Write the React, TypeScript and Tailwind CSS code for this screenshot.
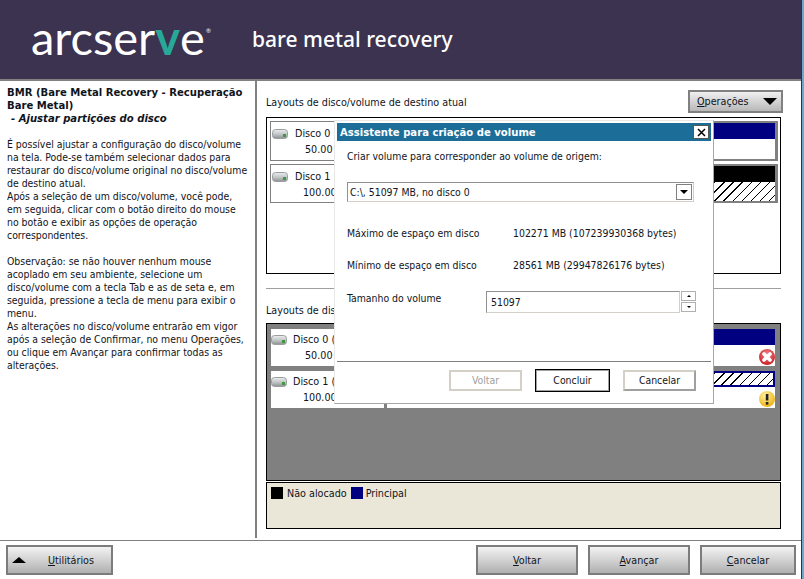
import React from "react";

const HATCH = "bg-[repeating-linear-gradient(135deg,#000_0,#000_0.8px,#fff_0.8px,#fff_6.4px)]";

function DiskIcon() {
  return (
    <svg width="16" height="10" viewBox="0 0 16 10" className="shrink-0">
      <defs>
        <linearGradient id="disk" x1="0" y1="0" x2="0" y2="1">
          <stop offset="0" stopColor="#eceeee" />
          <stop offset="0.5" stopColor="#c4c8c8" />
          <stop offset="1" stopColor="#8c9090" />
        </linearGradient>
      </defs>
      <rect x="0.5" y="0.5" width="15" height="9" rx="3" fill="url(#disk)" stroke="#9a9e9e" />
      <rect x="11" y="5" width="3" height="3" fill="#3f9a3f" />
    </svg>
  );
}

function DiskLabel({ n, size, indent, gap }: { n: string; size: string; indent: string; gap: string }) {
  return (
    <div>
      <div className={`flex items-center ${gap}`}>
        <DiskIcon />
        <span>Disco {n} (</span>
      </div>
      <div className={`mt-[3px] ${indent}`}>{size}</div>
    </div>
  );
}

function FooterButton({ children, width }: { children: React.ReactNode; width: string }) {
  return (
    <div className={`flex items-center justify-center h-[30px] ${width} border-2 border-[#7c7c7c] bg-gradient-to-b from-[#f2f2f2] via-[#d2d2d2] to-[#b0b0b0]`}>
      {children}
    </div>
  );
}

function DialogButton({ label, cls }: { label: string; cls: string }) {
  return <div className={`flex items-center justify-center ${cls}`}>{label}</div>;
}

export default function App() {
  return (
    <div className="relative w-[804px] h-[579px] bg-white overflow-hidden flex text-[10.7px] leading-[13px] text-[#10141c] font-['DejaVu_Sans_Condensed','DejaVu_Sans',sans-serif] [font-stretch:condensed]">
      <div className="w-[801px] h-full flex flex-col">
        <header className="h-[81px] shrink-0 bg-[#3b3350] border-b-2 border-[#808080] flex items-center pl-[31px] text-white">
          <div className="flex items-start font-['Lato',sans-serif] font-normal text-[47px] leading-none w-[221px] -mt-[4px]">
            <span>arcser</span>
            <span className="text-[#27a898] font-bold">v</span>
            <span>e</span>
            <span className="text-[6px] mt-[14px] ml-[1px]">®</span>
          </div>
          <div className="text-[21px] leading-none font-['Noto_Sans',sans-serif] font-medium">bare metal recovery</div>
        </header>

        <main className="flex h-[459px] shrink-0">
          <aside className="w-[257px] shrink-0 border-r-2 border-[#808080] pl-[7px] pt-[5px] mb-[2px] whitespace-nowrap">
            <div className="font-bold text-[11.2px]">BMR (Bare Metal Recovery - Recuperação<br />Bare Metal)</div>
            <div className="font-bold italic pl-[4px] text-[11.2px]">- Ajustar partições do disco</div>
            <div className="mt-[13px] text-[10.4px]">
              É possível ajustar a configuração do disco/volume<br />
              na tela. Pode-se também selecionar dados para<br />
              restaurar do disco/volume original no disco/volume<br />
              de destino atual.<br />
              Após a seleção de um disco/volume, você pode,<br />
              em seguida, clicar com o botão direito do mouse<br />
              no botão e exibir as opções de operação<br />
              correspondentes.
            </div>
            <div className="mt-[13px] text-[10.4px]">
              Observação: se não houver nenhum mouse<br />
              acoplado em seu ambiente, selecione um<br />
              disco/volume com a tecla Tab e as de seta e, em<br />
              seguida, pressione a tecla de menu para exibir o<br />
              menu.<br />
              As alterações no disco/volume entrarão em vigor<br />
              após a seleção de Confirmar, no menu Operações,<br />
              ou clique em Avançar para confirmar todas as<br />
              alterações.
            </div>
          </aside>

          <section className="w-[525px] pl-[9px] flex flex-col">
            <div className="flex justify-between h-[36px] pt-[9px] w-[517px]">
              <span className="mt-[6px]">Layouts de disco/volume de destino atual</span>
              <div className="flex items-center justify-between w-[95px] h-[23px] border-2 border-[#808080] bg-gradient-to-b from-[#f0f0f0] to-[#b8b8b8] pl-[7px] pr-[4px]">
                <span><span className="underline">O</span>perações</span>
                <span className="w-0 h-0 border-x-[7px] border-x-transparent border-t-[7px] border-t-black" />
              </div>
            </div>

            <div className="h-[157px] w-[515px] border border-black pt-[3px] pl-[3px] pr-[2px] flex flex-col gap-[3px]">
              <div className="flex gap-[3px] h-[40px]">
                <div className="w-[114px] border border-[#808080] pt-[5px] pl-[1px]">
                  <DiskLabel n="0" size="50.00" indent="ml-[33px]" gap="gap-[7px]" />
                </div>
                <div className="flex-1 border-y-2 border-r-[3px] border-l-2 border-[#808080]">
                  <div className="h-[16px] bg-[#000080]" />
                </div>
              </div>
              <div className="flex gap-[3px] h-[39px]">
                <div className="w-[114px] border border-[#808080] pt-[5px] pl-[1px]">
                  <DiskLabel n="1" size="100.00" indent="ml-[31px]" gap="gap-[7px]" />
                </div>
                <div className="flex-1 border-y-2 border-r-[3px] border-l-2 border-[#808080] flex flex-col">
                  <div className="h-[16px] bg-black" />
                  <div className={`flex-1 ${HATCH}`} />
                </div>
              </div>
            </div>

            <div className="mt-[14px] h-px w-[515px] bg-[#a0a0a0]" />
            <div className="h-[34px] pt-[15px]">Layouts de dis</div>

            <div className="h-[158px] w-[515px] border border-black bg-[#808080] pt-[5px] pl-[4px] pr-[5px] flex flex-col gap-[5px]">
              <div className="flex gap-[3px] h-[37px]">
                <div className="w-[113px] bg-white pt-[4px]">
                  <DiskLabel n="0" size="50.00" indent="ml-[34px]" gap="gap-[6px]" />
                </div>
                <div className="flex-1 bg-white flex flex-col items-end">
                  <div className="w-full h-[16px] bg-[#000080]" />
                  <svg width="16" height="16" viewBox="0 0 16 16" className="mt-[4px]">
                    <defs>
                      <radialGradient id="red" cx="0.5" cy="0.35" r="0.7">
                        <stop offset="0" stopColor="#f28a8a" />
                        <stop offset="1" stopColor="#c8141c" />
                      </radialGradient>
                    </defs>
                    <circle cx="8" cy="8" r="8" fill="url(#red)" />
                    <path d="M5 5l6 6M11 5l-6 6" stroke="#fff" strokeWidth="3.6" strokeLinecap="round" />
                  </svg>
                </div>
              </div>
              <div className="flex gap-[3px] h-[37px]">
                <div className="w-[113px] bg-white pt-[4px]">
                  <DiskLabel n="1" size="100.00" indent="ml-[32px]" gap="gap-[6px]" />
                </div>
                <div className="flex-1 bg-white flex flex-col items-end">
                  <div className={`w-full h-[16px] border-2 border-[#000080] ${HATCH}`} />
                  <svg width="16" height="16" viewBox="0 0 16 16" className="mt-[4px]">
                    <defs>
                      <radialGradient id="yel" cx="0.4" cy="0.3" r="0.8">
                        <stop offset="0" stopColor="#fff2a0" />
                        <stop offset="1" stopColor="#eaa900" />
                      </radialGradient>
                    </defs>
                    <circle cx="8" cy="8" r="8" fill="url(#yel)" />
                    <rect x="6.8" y="3" width="2.6" height="6.5" fill="#222" />
                    <rect x="6.8" y="11" width="2.6" height="2.6" fill="#222" />
                  </svg>
                </div>
              </div>
            </div>

            <div className="mt-[1px] h-[47px] w-[515px] border border-black bg-[#ebe7d8] flex items-start gap-[3px] px-[4px] pt-[4px]">
              <span className="w-[12px] h-[12px] bg-black" />
              <span className="ml-[1px]">Não alocado</span>
              <span className="w-[12px] h-[12px] bg-[#000080] ml-[1px]" />
              <span>Principal</span>
            </div>
          </section>
        </main>

        <footer className="flex-1 border-t border-[#808080] flex items-start justify-between pl-[6px] pr-[5px] pt-[4px]">
          <FooterButton width="w-[107px]">
            <div className="flex items-center w-full pl-[4px]">
              <span className="w-0 h-0 border-x-[7px] border-x-transparent border-b-[6px] border-b-black" />
              <span className="ml-[22px]"><span className="underline">U</span>tilitários</span>
            </div>
          </FooterButton>
          <div className="flex gap-[10px]">
            <FooterButton width="w-[102px]"><span><span className="underline">V</span>oltar</span></FooterButton>
            <FooterButton width="w-[102px]"><span><span className="underline">A</span>vançar</span></FooterButton>
            <FooterButton width="w-[96px]"><span><span className="underline">C</span>ancelar</span></FooterButton>
          </div>
        </footer>
      </div>
      <div className="w-[3px] h-full border-l border-[#1a3a52] bg-[#6aa8cc]" />

      <div className="absolute left-[334px] top-[120px] w-[380px] h-[284px] bg-white border border-[#a8a8a8] border-t-[#e8e8e8] border-l-[#e8e8e8] pt-[2px] px-[2px] flex flex-col text-[10.4px]">
        <div className="h-[18px] shrink-0 bg-[#1c6e99] flex items-center justify-between pl-[3px] pr-[2px]">
          <span className="font-bold text-white text-[11.2px]">Assistente para criação de volume</span>
          <span className="w-[16px] h-[14px] bg-white border border-[#555] flex items-center justify-center">
            <svg width="9" height="9" viewBox="0 0 9 9"><path d="M1 1l7 7M8 1l-7 7" stroke="#000" strokeWidth="1.5" /></svg>
          </span>
        </div>
        <div className="pl-[10px] flex-1 flex flex-col">
          <div className="mt-[9px]">Criar volume para corresponder ao volume de origem:</div>
          <div className="mt-[19px] h-[20px] w-[347px] border border-[#909090] border-r-[#d4d0c8] border-b-[#d4d0c8] flex items-center justify-between pl-[2px] pr-[1px]">
            <span>C:\, 51097 MB, no disco 0</span>
            <span className="w-[16px] h-[16px] border border-[#808080] flex items-center justify-center">
              <span className="w-0 h-0 border-x-[4px] border-x-transparent border-t-[4px] border-t-black" />
            </span>
          </div>
          <div className="mt-[25px] flex h-[13px]">
            <span className="w-[166px]">Máximo de espaço em disco</span>
            <span>102271 MB (107239930368 bytes)</span>
          </div>
          <div className="mt-[19px] flex h-[13px]">
            <span className="w-[166px]">Mínimo de espaço em disco</span>
            <span>28561 MB (29947826176 bytes)</span>
          </div>
          <div className="mt-[19px] flex items-start">
            <span className="w-[139px] pt-[1px]">Tamanho do volume</span>
            <div className="w-[194px] h-[22px] border border-[#909090] border-r-[#d4d0c8] border-b-[#d4d0c8] flex items-center pl-[4px]">51097</div>
            <div className="ml-[1px] flex flex-col gap-[1px]">
              <span className="w-[15px] h-[10px] border border-[#b0b0b0] flex items-center justify-center"><span className="w-0 h-0 border-x-[2px] border-x-transparent border-b-[2px] border-b-black" /></span>
              <span className="w-[15px] h-[10px] border border-[#b0b0b0] flex items-center justify-center"><span className="w-0 h-0 border-x-[2px] border-x-transparent border-t-[2px] border-t-black" /></span>
            </div>
          </div>
        </div>
        <div className="h-[42px] shrink-0 border-t border-[#808080] flex justify-end items-start gap-[13px] pr-[15px] pt-[8px]">
          <DialogButton label="Voltar" cls="w-[73px] h-[21px] border-2 border-[#d4d0c8] text-[#a0a0a0]" />
          <DialogButton label="Concluir" cls="w-[75px] h-[23px] -mt-[1px] border border-black outline outline-1 outline-[#a0a0a0] -outline-offset-2" />
          <DialogButton label="Cancelar" cls="w-[73px] h-[21px] border-2 border-[#d4d0c8] border-b-[#a0a0a0] border-r-[#a0a0a0]" />
        </div>
      </div>
    </div>
  );
}
